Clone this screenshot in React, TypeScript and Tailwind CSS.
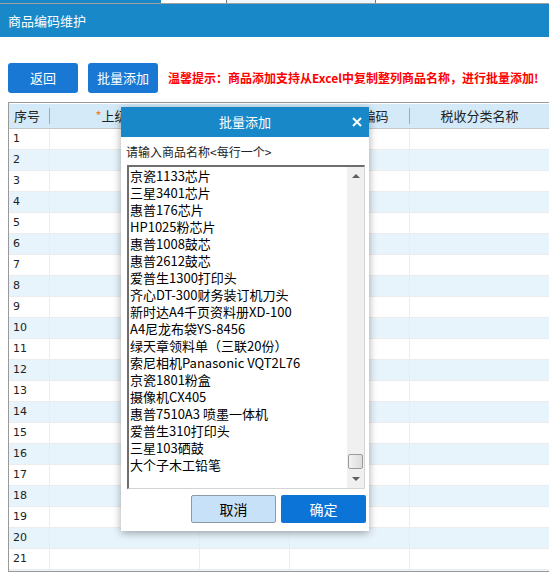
import React from 'react';

const items = [
  '京瓷1133芯片',
  '三星3401芯片',
  '惠普176芯片',
  'HP1025粉芯片',
  '惠普1008鼓芯',
  '惠普2612鼓芯',
  '爱普生1300打印头',
  '齐心DT-300财务装订机刀头',
  '新时达A4千页资料册XD-100',
  'A4尼龙布袋YS-8456',
  '绿天章领料单（三联20份）',
  '索尼相机Panasonic VQT2L76',
  '京瓷1801粉盒',
  '摄像机CX405',
  '惠普7510A3 喷墨一体机',
  '爱普生310打印头',
  '三星103硒鼓',
  '大个子木工铅笔',
];

const rows = Array.from({ length: 21 }, (_, i) => i + 1);

function HeadDivider() {
  return <div className="w-px h-[16px] bg-[#a3a9ae] self-center shrink-0" />;
}

function BatchAddDialog() {
  return (
    <div className="absolute left-[121px] top-[107px] w-[248px] h-[424px] bg-white shadow-[0_2px_8px_rgba(0,0,0,0.35)] flex flex-col">
      <div className="h-[30px] bg-[#1888c9] flex items-center shrink-0">
        <div className="w-[24px]" />
        <div className="flex-1 text-center text-white text-[13px]">批量添加</div>
        <div className="w-[24px] flex items-center justify-center">
          <svg width="10" height="10" viewBox="0 0 10 10">
            <path d="M1 1 L9 9 M9 1 L1 9" stroke="#fff" strokeWidth="2" />
          </svg>
        </div>
      </div>
      <div className="pl-[5px] mt-[5px] h-[20px] leading-[20px] text-[12px] text-[#222]">
        请输入商品名称&lt;每行一个&gt;
      </div>
      <div className="ml-[6px] mt-[3px] w-[238px] h-[324px] flex border-t-2 border-l-2 border-[#6e6e6e] border-r border-b border-r-[#d4d4d4] border-b-[#d4d4d4]">
        <div className="flex-1 pl-[1px] overflow-hidden text-[13px] text-black">
          {items.map((t) => (
            <div key={t} className="h-[17px] leading-[17px] whitespace-nowrap overflow-hidden">
              {t}
            </div>
          ))}
        </div>
        <div className="w-[17px] bg-[#f0f0f0] flex flex-col shrink-0">
          <div className="h-[17px] flex items-center justify-center">
            <svg width="8" height="5" viewBox="0 0 8 5">
              <path d="M0 5 L4 1 L8 5 Z" fill="#5f5f5f" />
            </svg>
          </div>
          <div className="flex-1 flex flex-col justify-end">
            <div className="mx-px mb-[2px] h-[15px] rounded-[2px] border border-[#9a9a9a] bg-gradient-to-r from-[#f2f2f2] to-[#dcdcdc]" />
          </div>
          <div className="h-[17px] flex items-center justify-center">
            <svg width="8" height="5" viewBox="0 0 8 5">
              <path d="M0 0 L4 4 L8 0 Z" fill="#5f5f5f" />
            </svg>
          </div>
        </div>
      </div>
      <div className="mt-[6px] pr-[3px] flex justify-end gap-[5px]">
        <button className="w-[85px] h-[28px] rounded-[2px] border border-[#8d9aa6] bg-[#c7e2f8] text-[14px] text-black">
          取消
        </button>
        <button className="w-[85px] h-[28px] rounded-[2px] bg-[#0b74d6] text-[14px] text-white">
          确定
        </button>
      </div>
    </div>
  );
}

export default function App() {
  return (
    <div className="relative w-[549px] h-[579px] overflow-hidden bg-white font-['Noto_Sans_CJK_SC',sans-serif]">
      {/* tab strip */}
      <div className="h-[3px] flex">
        <div className="w-[161px] bg-[#1888c9]" />
        <div className="w-[65px] bg-white" />
        <div className="w-px bg-[#777]" />
        <div className="w-[148px] bg-[#eef6fc]" />
        <div className="w-px bg-[#777]" />
        <div className="flex-1 bg-white" />
      </div>
      <div className="h-px bg-[#a0a0a0]" />

      <div className="h-[33px] bg-[#1888c9] flex items-center pl-[8px] text-white text-[13px]">
        商品编码维护
      </div>

      <div className="mt-[26px] pl-[8px] flex items-center gap-[10px]">
        <button className="w-[70px] h-[30px] rounded-[3px] bg-[#1878d3] text-white text-[13px]">返回</button>
        <button className="w-[70px] h-[30px] rounded-[3px] bg-[#1878d3] text-white text-[13px]">批量添加</button>
        <span className="text-[#ff0000] text-[12px] font-bold whitespace-nowrap">
          温馨提示：商品添加支持从Excel中复制整列商品名称，进行批量添加!
        </span>
      </div>

      <div className="mt-[9px] ml-[8px] w-[560px] border border-[#999] pt-px">
        <div className="h-[25px] bg-[#d4eaf8] border-b border-[#c4c8cc] flex text-[13px] text-[#222]">
          <div className="w-[40px] pl-[5px] flex items-center">序号</div>
          <HeadDivider />
          <div className="w-[149px] flex items-center justify-center">
            <span className="text-[#f08020]">*</span>上级分类
          </div>
          <HeadDivider />
          <div className="w-[89px] flex items-center justify-center">商品名称</div>
          <HeadDivider />
          <div className="w-[119px] flex items-center justify-center">税收分类编码</div>
          <HeadDivider />
          <div className="w-[139px] flex items-center justify-center">税收分类名称</div>
        </div>
        {rows.map((n) => (
          <div
            key={n}
            className={`h-[21px] flex border-b border-[#ececec] ${n % 2 === 0 ? 'bg-[#e8f4fc]' : 'bg-white'}`}
          >
            <div className="w-[41px] border-r border-[#ececec] pl-[4px] flex items-center font-['DejaVu_Sans',sans-serif] text-[11px] text-[#222]">
              {n}
            </div>
            <div className="w-[150px] border-r border-[#ececec]" />
            <div className="w-[90px] border-r border-[#ececec]" />
            <div className="w-[120px] border-r border-[#ececec]" />
            <div className="flex-1" />
          </div>
        ))}
        <div className="h-[1px] bg-[#e8f4fc]" />
      </div>

      <BatchAddDialog />
    </div>
  );
}
